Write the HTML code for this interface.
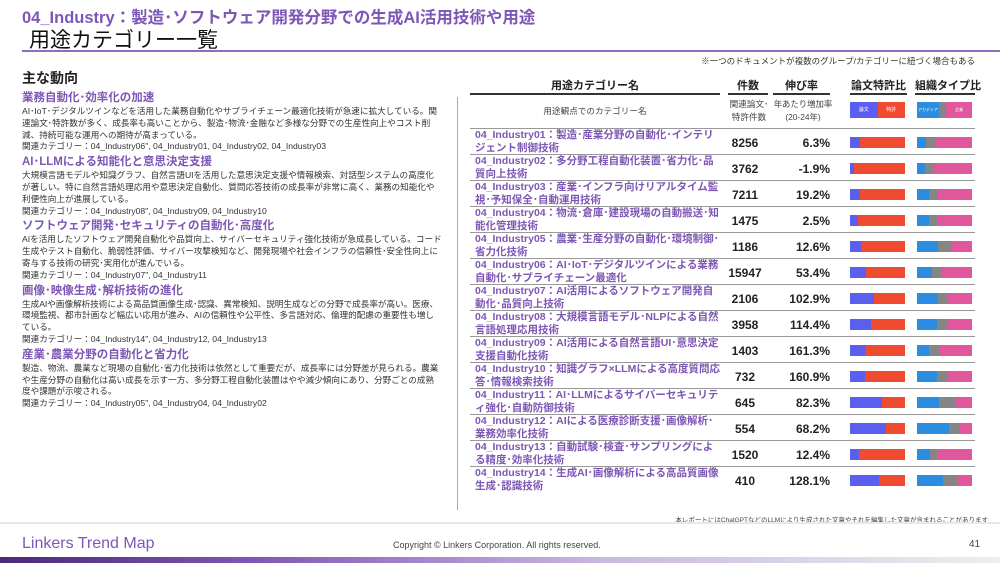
<!DOCTYPE html>
<html><head><meta charset="utf-8"><style>
*{margin:0;padding:0;box-sizing:border-box}
body{width:1000px;height:563px;background:#fff;position:relative;overflow:hidden;font-family:"Liberation Sans","Noto Sans CJK JP",sans-serif;color:#333}
.a{position:absolute}
.t1{left:22px;top:4px;font-size:16.5px;font-weight:bold;color:#7e56b5;white-space:nowrap}
.t2{left:29px;top:24px;font-size:21px;color:#111;white-space:nowrap}
.hl{left:22px;top:50px;width:978px;height:2px;background:#8e6cc0}
.note{right:25px;top:55px;font-size:8.5px;color:#333;white-space:nowrap}
.left{left:22px;top:68px;width:420px}
.left h2{font-size:14px;font-weight:bold;color:#222;margin-bottom:2px}
.left h3{font-size:11.5px;font-weight:bold;color:#7e56b5;line-height:16px}
.left p{font-size:8.6px;line-height:11.8px;color:#333;margin-bottom:1px}
.vl{left:457px;top:97px;width:1px;height:413px;background:#aaa}
.th{top:79px;font-size:11px;font-weight:bold;color:#222;text-align:center;border-bottom:2px solid #333;height:16px;line-height:14px;white-space:nowrap}
.sub{font-size:8.6px;color:#444;text-align:center;line-height:13px;white-space:nowrap}
.row{position:absolute;left:470px;width:505px;height:26px;border-top:1px solid #999}
.nm{position:absolute;left:5px;top:0px;width:246px;font-size:10.5px;line-height:12.5px;font-weight:bold;color:#7e56b5}
.n{position:absolute;left:255px;width:40px;top:7px;text-align:center;font-size:12px;font-weight:bold;color:#222}
.g{position:absolute;left:300px;width:60px;top:7px;text-align:right;font-size:12px;font-weight:bold;color:#222}
.b{position:absolute;top:8px;height:11px;width:55px;display:flex}
.b span{height:100%}
.p1{background:#5b5ff0}.p2{background:#ee4b30}.o1{background:#2b8de0}.o2{background:#858585}.o3{background:#e0579c}
.foot{left:0;top:522px;width:1000px;height:2px;background:#e8e8e8}
</style></head><body>
<div class="a t1">04_Industry：製造･ソフトウェア開発分野での生成AI活用技術や用途</div>
<div class="a t2">用途カテゴリー一覧</div>
<div class="a hl"></div>
<div class="a note">※一つのドキュメントが複数のグループ/カテゴリーに紐づく場合もある</div>
<div class="a left">
<h2>主な動向</h2>
<h3>業務自動化･効率化の加速</h3>
<p>AI･IoT･デジタルツインなどを活用した業務自動化やサプライチェーン最適化技術が急速に拡大している。関連論文･特許数が多く、成長率も高いことから、製造･物流･金融など多様な分野での生産性向上やコスト削減、持続可能な運用への期待が高まっている。<br>関連カテゴリー：04_Industry06", 04_Industry01, 04_Industry02, 04_Industry03</p>
<h3>AI･LLMによる知能化と意思決定支援</h3>
<p>大規模言語モデルや知識グラフ、自然言語UIを活用した意思決定支援や情報検索、対話型システムの高度化が著しい。特に自然言語処理応用や意思決定自動化、質問応答技術の成長率が非常に高く、業務の知能化や利便性向上が進展している。<br>関連カテゴリー：04_Industry08", 04_Industry09, 04_Industry10</p>
<h3>ソフトウェア開発･セキュリティの自動化･高度化</h3>
<p>AIを活用したソフトウェア開発自動化や品質向上、サイバーセキュリティ強化技術が急成長している。コード生成やテスト自動化、脆弱性評価、サイバー攻撃検知など、開発現場や社会インフラの信頼性･安全性向上に寄与する技術の研究･実用化が進んでいる。<br>関連カテゴリー：04_Industry07", 04_Industry11</p>
<h3>画像･映像生成･解析技術の進化</h3>
<p>生成AIや画像解析技術による高品質画像生成･認識、異常検知、説明生成などの分野で成長率が高い。医療、環境監視、都市計画など幅広い応用が進み、AIの信頼性や公平性、多言語対応、倫理的配慮の重要性も増している。<br>関連カテゴリー：04_Industry14", 04_Industry12, 04_Industry13</p>
<h3>産業･農業分野の自動化と省力化</h3>
<p>製造、物流、農業など現場の自動化･省力化技術は依然として重要だが、成長率には分野差が見られる。農業や生産分野の自動化は高い成長を示す一方、多分野工程自動化装置はやや減少傾向にあり、分野ごとの成熟度や課題が示唆される。<br>関連カテゴリー：04_Industry05", 04_Industry04, 04_Industry02</p>
</div>
<div class="a vl"></div>
<div class="a th" style="left:470px;width:250px">用途カテゴリー名</div>
<div class="a th" style="left:728px;width:40px">件数</div>
<div class="a th" style="left:773px;width:57px">伸び率</div>
<div class="a th" style="left:850px;width:57px">論文特許比</div>
<div class="a th" style="left:915px;width:60px">組織タイプ比</div>
<div class="a sub" style="left:470px;width:250px;top:105px">用途観点でのカテゴリー名</div>
<div class="a sub" style="left:725px;width:48px;top:98px">関連論文･<br>特許件数</div>
<div class="a sub" style="left:773px;width:60px;top:98px;font-size:8.4px">年あたり増加率<br>(20-24年)</div>
<div class="a" style="left:850px;top:102px;width:55px;height:16px;display:flex;font-size:5px;color:#fff;line-height:16px;text-align:center"><span style="flex:1;background:#5b5ff0">論文</span><span style="flex:1;background:#ee4b30">特許</span></div>
<div class="a" style="left:917px;top:102px;width:55px;height:16px;display:flex;font-size:4px;color:#fff;line-height:16px;text-align:center"><span style="flex:22;background:#2b8de0">アカデミア</span><span style="flex:7;background:#858585"></span><span style="flex:26;background:#e0579c">企業</span></div>
<div id="rows"></div>
<div class="a" style="right:12px;top:514px;font-size:6.5px;color:#444">本レポートにはChatGPTなどのLLMにより生成された文章やそれを編集した文章が含まれることがあります</div>
<div class="a foot"></div>
<div class="a" style="left:22px;top:535px;font-size:16px;color:#7e56b5">Linkers Trend Map</div>
<div class="a" style="left:393px;top:540px;font-size:9px;color:#444">Copyright © Linkers Corporation. All rights reserved.</div>
<div class="a" style="left:969px;top:539px;font-size:10px;color:#444">41</div>
<div class="a" style="left:0;top:557px;width:1000px;height:6px;background:linear-gradient(90deg,#4a2a7a,#7e56b5 25%,#c9b8e0 60%,#eee 100%)"></div>
<script>
var d=[
["04_Industry01：製造･産業分野の自動化･インテリジェント制御技術","8256","6.3%",.18,.17,.18],
["04_Industry02：多分野工程自動化装置･省力化･品質向上技術","3762","-1.9%",.08,.15,.15],
["04_Industry03：産業･インフラ向けリアルタイム監視･予知保全･自動運用技術","7211","19.2%",.19,.21,.18],
["04_Industry04：物流･倉庫･建設現場の自動搬送･知能化管理技術","1475","2.5%",.15,.22,.14],
["04_Industry05：農業･生産分野の自動化･環境制御･省力化技術","1186","12.6%",.2,.38,.24],
["04_Industry06：AI･IoT･デジタルツインによる業務自動化･サプライチェーン最適化","15947","53.4%",.29,.28,.18],
["04_Industry07：AI活用によるソフトウェア開発自動化･品質向上技術","2106","102.9%",.44,.38,.19],
["04_Industry08：大規模言語モデル･NLPによる自然言語処理応用技術","3958","114.4%",.39,.37,.18],
["04_Industry09：AI活用による自然言語UI･意思決定支援自動化技術","1403","161.3%",.29,.22,.18],
["04_Industry10：知識グラフ×LLMによる高度質問応答･情報検索技術","732","160.9%",.27,.36,.18],
["04_Industry11：AI･LLMによるサイバーセキュリティ強化･自動防御技術","645","82.3%",.58,.4,.31],
["04_Industry12：AIによる医療診断支援･画像解析･業務効率化技術","554","68.2%",.65,.58,.21],
["04_Industry13：自動試験･検査･サンプリングによる精度･効率化技術","1520","12.4%",.16,.24,.12],
["04_Industry14：生成AI･画像解析による高品質画像生成･認識技術","410","128.1%",.53,.48,.24]];
var h="";d.forEach(function(r,i){var y=128+i*26;
h+='<div class="row" style="top:'+y+'px"><div class="nm">'+r[0]+'</div><div class="n">'+r[1]+'</div><div class="g">'+r[2]+'</div>'+
'<div class="b" style="left:380px"><span class="p1" style="width:'+(r[3]*100)+'%"></span><span class="p2" style="flex:1"></span></div>'+
'<div class="b" style="left:447px"><span class="o1" style="width:'+(r[4]*100)+'%"></span><span class="o2" style="width:'+(r[5]*100)+'%"></span><span class="o3" style="flex:1"></span></div></div>';});
document.getElementById("rows").innerHTML=h;
</script>
</body></html>
